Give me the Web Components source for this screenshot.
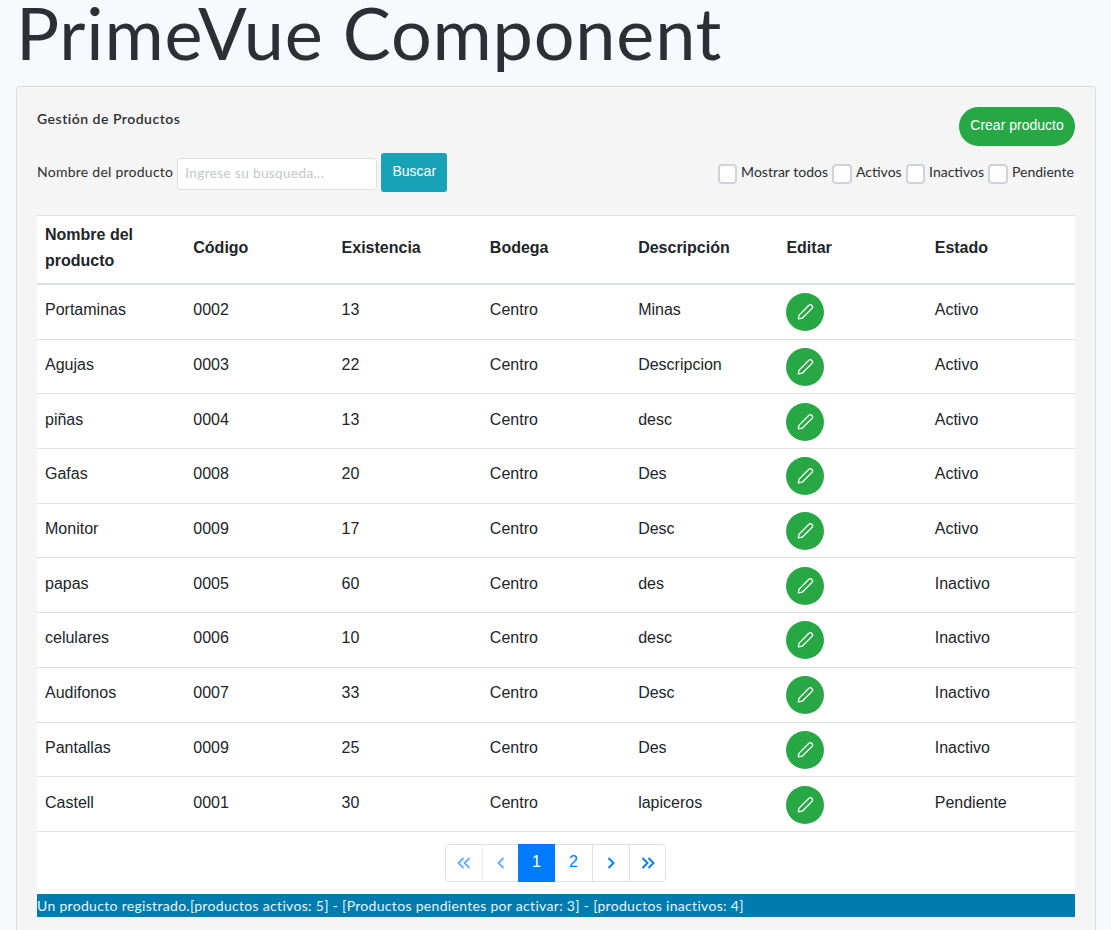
<!DOCTYPE html>
<html lang="es"><head><meta charset="utf-8"><title>PrimeVue Component</title>
<style>
html,body{margin:0;height:930px;overflow:hidden;background:#f8f9fc}
body{font-family:Lato,"Liberation Sans",sans-serif;color:#212529}
</style></head><body>
<product-page></product-page>
<script>
const PENCIL='<svg width="18" height="18" viewBox="0 0 18 18" fill="none" stroke="currentColor" stroke-width="1.3" stroke-linejoin="round"><path d="M2.3 15.9l.8-3.8 9.8-9.8a2.2 2.2 0 0 1 3.1 3.1L6.200 15.200z"/></svg>';
const NUN='Lato,"Liberation Sans",sans-serif';
const SANS='"Liberation Sans",Arial,sans-serif';
class ProductPage extends HTMLElement{constructor(){super();this.attachShadow({mode:'open'}).innerHTML=`<style>
:host{display:block;padding:0 15px 0 16px}
h1{margin:0;height:86px;font:400 72px/64px ${NUN};letter-spacing:.8px;color:#2c3035;white-space:nowrap}
</style><h1>PrimeVue Component</h1><product-card></product-card>`}}
class ProductCard extends HTMLElement{constructor(){super();this.attachShadow({mode:'open'}).innerHTML=`<style>
:host{display:block;height:860px;box-sizing:border-box;background:#f5f5f5;border:1px solid #ddd;border-radius:4px;padding:20px 20px 0}
.top{display:flex;justify-content:space-between;align-items:flex-start;height:46px}
h2{margin:3px 0 0;font:600 14px/18px ${NUN};letter-spacing:.5px;color:#2b2f33}
.btn{border:0;color:#fff;font:400 14px/20px ${SANS};padding:0 0 4px}
.create{width:116px;height:39px;border-radius:20px;background:#28a745}
.filters{display:flex;justify-content:space-between;align-items:flex-start;height:62px}
.search{display:flex;align-items:flex-start;font:400 14px/20px ${NUN};letter-spacing:.25px;color:#2b2f33}
.search label{margin:9px 4px 0 0}
input{box-sizing:border-box;width:200px;height:32px;margin:5px 4px 0 0;border:1px solid #dedede;border-radius:4px;background:#fff;padding:0 7px 2px;font:400 13.5px ${NUN};letter-spacing:.4px;outline:0}
input::placeholder{color:#c3c6cc;opacity:1}
.search .btn{width:66px;height:39px;border-radius:3px;background:#17a2b8;letter-spacing:0}
.checks{display:grid;grid-template-columns:110px 70px 78px 87px;gap:4px;margin-top:9px;font:400 14px/20px ${NUN};color:#2b2f33;white-space:nowrap}
.status{height:23px;background:#007bb0;color:#e8f4f8;font:400 14px/23px ${NUN};letter-spacing:.31px;white-space:nowrap}
</style>
<div class="top"><h2>Gestión de Productos</h2><button class="btn create">Crear producto</button></div>
<div class="filters"><div class="search"><label>Nombre del producto</label><input placeholder="Ingrese su busqueda..."><button class="btn">Buscar</button></div>
<div class="checks"><check-box>Mostrar todos</check-box><check-box>Activos</check-box><check-box>Inactivos</check-box><check-box>Pendiente</check-box></div></div>
<product-table></product-table><page-nav></page-nav>
<div class="status">Un producto registrado.[productos activos: 5] - [Productos pendientes por activar: 3] - [productos inactivos: 4]</div>`}}
class CheckBox extends HTMLElement{constructor(){super();this.attachShadow({mode:'open'}).innerHTML=`<style>
:host{display:flex;align-items:flex-start;gap:4px}
i{display:block;box-sizing:border-box;width:20px;height:20px;background:#fff;border:2px solid #ced4da;border-radius:4px;margin-top:2px}
</style><i></i><span><slot></slot></span>`}}
const ROWS=[['Portaminas','0002','13','Minas','Activo'],['Agujas','0003','22','Descripcion','Activo'],['piñas','0004','13','desc','Activo'],['Gafas','0008','20','Des','Activo'],['Monitor','0009','17','Desc','Activo'],['papas','0005','60','des','Inactivo'],['celulares','0006','10','desc','Inactivo'],['Audifonos','0007','33','Desc','Inactivo'],['Pantallas','0009','25','Des','Inactivo'],['Castell','0001','30','lapiceros','Pendiente']];
class ProductTable extends HTMLElement{constructor(){super();this.attachShadow({mode:'open'}).innerHTML=`<style>
:host{display:block;background:#fff;font:400 16px/24px ${SANS};color:#212529}
.r{display:grid;grid-template-columns:repeat(7,1fr);align-items:center;height:54.7px;box-sizing:border-box;border-top:1px solid #dee2e6}
.h{height:70px;border-bottom:2px solid #dee2e6;font-weight:700;line-height:26px}
.h+.r{border-top:0;height:53.7px}
.r>div{padding:0 8px 3px}
.h+.r>div{padding-bottom:4px}
.r>div.c{padding:0 8px}
.e{display:flex;align-items:center;justify-content:center;width:38px;height:38px;border-radius:50%;background:#28a745;color:#fff;margin:1px 0 0 0}
</style><div class="r h"><div>Nombre del producto</div><div>Código</div><div>Existencia</div><div>Bodega</div><div>Descripción</div><div>Editar</div><div>Estado</div></div>
${ROWS.map(r=>`<div class="r"><div>${r[0]}</div><div>${r[1]}</div><div>${r[2]}</div><div>Centro</div><div>${r[3]}</div><div class="c"><span class="e">${PENCIL}</span></div><div>${r[4]}</div></div>`).join('')}`}}
class PageNav extends HTMLElement{constructor(){super();
const ch=(d)=>`<svg width="14" height="14" viewBox="0 0 14 14" fill="none" stroke="currentColor" stroke-width="1.9"><path d="${d}"/></svg>`;
this.attachShadow({mode:'open'}).innerHTML=`<style>
:host{display:flex;justify-content:center;background:#fff;height:63px;box-sizing:border-box;padding:12px 1px 0 0;border-top:1px solid #dee2e6}
.p{display:flex;height:38px;box-sizing:border-box;border:1px solid #dee2e6;border-radius:4px;background:#fff}
.p>span{display:flex;align-items:center;justify-content:center;width:37px;box-sizing:border-box;border-left:1px solid #dee2e6;color:#007bff;font:400 16px ${SANS};padding-bottom:2px}
.p>span.i{padding-bottom:0}
.p>span:first-child{border-left:0;width:36px}
.p>span:nth-child(2){width:36px}
.p>span:last-child{width:36px}
.off{opacity:.6}
.p>.a{background:#007bff;color:#fff;border:0;margin:-1px 0;height:38px;width:37px}
.p>.a+span{border-left:0}
</style><div class="p"><span class="i off">${ch('M6.500 2L1.500 7l5 5M12.500 2L7.500 7l5 5')}</span><span class="i off">${ch('M9.500 2L4.500 7l5 5')}</span><span class="a">1</span><span>2</span><span class="i">${ch('M4.500 2L9.500 7l-5 5')}</span><span class="i">${ch('M1.500 2L6.500 7l-5 5M7.500 2L12.500 7l-5 5')}</span></div>`}}
customElements.define('product-page',ProductPage);
customElements.define('product-card',ProductCard);
customElements.define('check-box',CheckBox);
customElements.define('product-table',ProductTable);
customElements.define('page-nav',PageNav);
</script></body></html>
